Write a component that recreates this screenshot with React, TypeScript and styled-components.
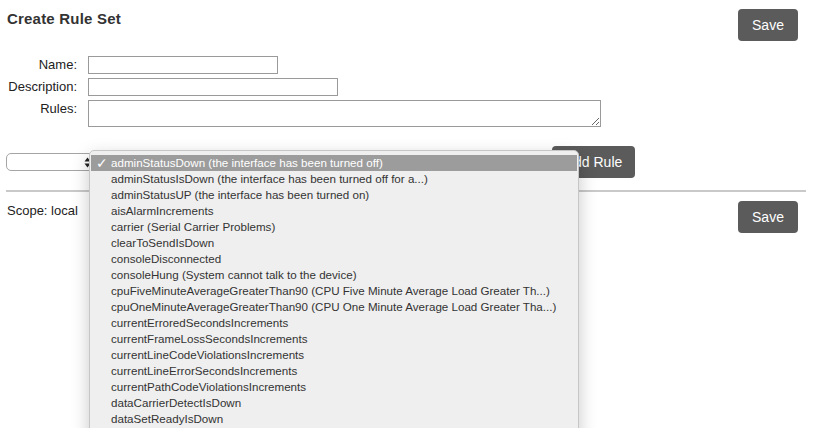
import { FC } from "react";
import styled, { createGlobalStyle } from "styled-components";

const GlobalStyle = createGlobalStyle`
  body {
    margin: 0;
    background: #fff;
    font-family: "Liberation Sans", Arial, sans-serif;
    color: #333;
  }
`;

const Page = styled.div`
  position: relative;
  width: 815px;
  height: 428px;
  overflow: hidden;
  padding: 0 9px 0 6px;
  box-sizing: border-box;
`;

const Header = styled.div`
  display: flex;
  justify-content: space-between;
  align-items: flex-start;
  padding: 9px 8px 0 1px;
`;

const Title = styled.h1`
  margin: 0;
  padding-top: 1px;
  font-size: 15px;
  letter-spacing: 0.2px;
  font-weight: bold;
  color: #333;
`;

const Button = styled.button`
  height: 32px;
  width: 60px;
  padding: 0;
  border: none;
  border-radius: 4px;
  background: #5b5b5b;
  color: #fff;
  font-family: "Liberation Sans", Arial, sans-serif;
  font-size: 14px;
  cursor: pointer;
`;

const Form = styled.div`
  display: grid;
  grid-template-columns: 71px auto;
  column-gap: 11px;
  row-gap: 4px;
  margin-top: 15px;
  justify-items: start;
`;

const Label = styled.label`
  justify-self: end;
  font-size: 13px;
  color: #222;
  line-height: 18px;
`;

const TextInput = styled.input<{ $width: number }>`
  width: ${(p) => p.$width}px;
  height: 18px;
  box-sizing: border-box;
  border: 1px solid #9a9a9a;
  padding: 0 3px;
  font-size: 13px;
  outline: none;
`;

const TextArea = styled.textarea`
  width: 513px;
  height: 27px;
  box-sizing: border-box;
  border: 1px solid #9a9a9a;
  padding: 2px 3px;
  font-size: 13px;
  outline: none;
  resize: both;
`;

const RuleRow = styled.div`
  display: flex;
  align-items: center;
  margin-top: 19px;
`;

const SelectBox = styled.div`
  width: 90px;
  height: 18px;
  box-sizing: border-box;
  border: 1px solid #a5a5a5;
  border-radius: 5px;
  background: #fff;
  display: flex;
  justify-content: flex-end;
  align-items: center;
  padding-right: 4px;
`;

const AddButton = styled(Button)`
  margin-left: 456px;
  width: 83px;
`;

const Divider = styled.hr`
  margin: 12px 0 0;
  border: none;
  height: 2px;
  background: #c9c9c9;
`;

const ScopeRow = styled.div`
  display: flex;
  justify-content: space-between;
  align-items: flex-start;
  padding: 9px 8px 0 1px;
`;

const Scope = styled.div`
  font-size: 13px;
  color: #222;
  padding-top: 2px;
`;

const Menu = styled.ul`
  position: absolute;
  left: 89px;
  top: 150px;
  width: 490px;
  height: 300px;
  margin: 0;
  padding: 4px 1px 0;
  box-sizing: border-box;
  list-style: none;
  background: #efefef;
  border: 1px solid #c6c6c6;
  border-radius: 5px 5px 0 0;
  box-shadow: 0 6px 18px rgba(0, 0, 0, 0.22);
`;

const Item = styled.li<{ $active?: boolean }>`
  position: relative;
  height: 16px;
  line-height: 16px;
  padding-left: 20px;
  font-size: 11.6px;
  white-space: nowrap;
  color: ${(p) => (p.$active ? "#fff" : "#333")};
  background: ${(p) => (p.$active ? "#9c9c9c" : "transparent")};
`;

const Check = styled.span`
  position: absolute;
  left: 5px;
  top: 0;
  font-size: 14px;
`;

const Stepper: FC = () => (
  <svg width="7" height="11" viewBox="0 0 7 11">
    <path d="M3.5 0.5 L6.5 4.5 H0.5 Z" fill="#222" />
    <path d="M3.5 10.5 L6.5 6.5 H0.5 Z" fill="#222" />
  </svg>
);

const rules = [
  "adminStatusDown (the interface has been turned off)",
  "adminStatusIsDown (the interface has been turned off for a...)",
  "adminStatusUP (the interface has been turned on)",
  "aisAlarmIncrements",
  "carrier (Serial Carrier Problems)",
  "clearToSendIsDown",
  "consoleDisconnected",
  "consoleHung (System cannot talk to the device)",
  "cpuFiveMinuteAverageGreaterThan90 (CPU Five Minute Average Load Greater Th...)",
  "cpuOneMinuteAverageGreaterThan90 (CPU One Minute Average Load Greater Tha...)",
  "currentErroredSecondsIncrements",
  "currentFrameLossSecondsIncrements",
  "currentLineCodeViolationsIncrements",
  "currentLineErrorSecondsIncrements",
  "currentPathCodeViolationsIncrements",
  "dataCarrierDetectIsDown",
  "dataSetReadyIsDown",
];

export default function App() {
  return (
    <Page>
      <GlobalStyle />
      <Header>
        <Title>Create Rule Set</Title>
        <Button>Save</Button>
      </Header>
      <Form>
        <Label>Name:</Label>
        <TextInput $width={190} />
        <Label>Description:</Label>
        <TextInput $width={250} />
        <Label>Rules:</Label>
        <TextArea />
      </Form>
      <RuleRow>
        <SelectBox>
          <Stepper />
        </SelectBox>
        <AddButton>Add Rule</AddButton>
      </RuleRow>
      <Divider />
      <ScopeRow>
        <Scope>Scope: local</Scope>
        <Button>Save</Button>
      </ScopeRow>
      <Menu>
        {rules.map((rule, i) => (
          <Item key={rule} $active={i === 0}>
            {i === 0 && <Check>✓</Check>}
            {rule}
          </Item>
        ))}
      </Menu>
    </Page>
  );
}
